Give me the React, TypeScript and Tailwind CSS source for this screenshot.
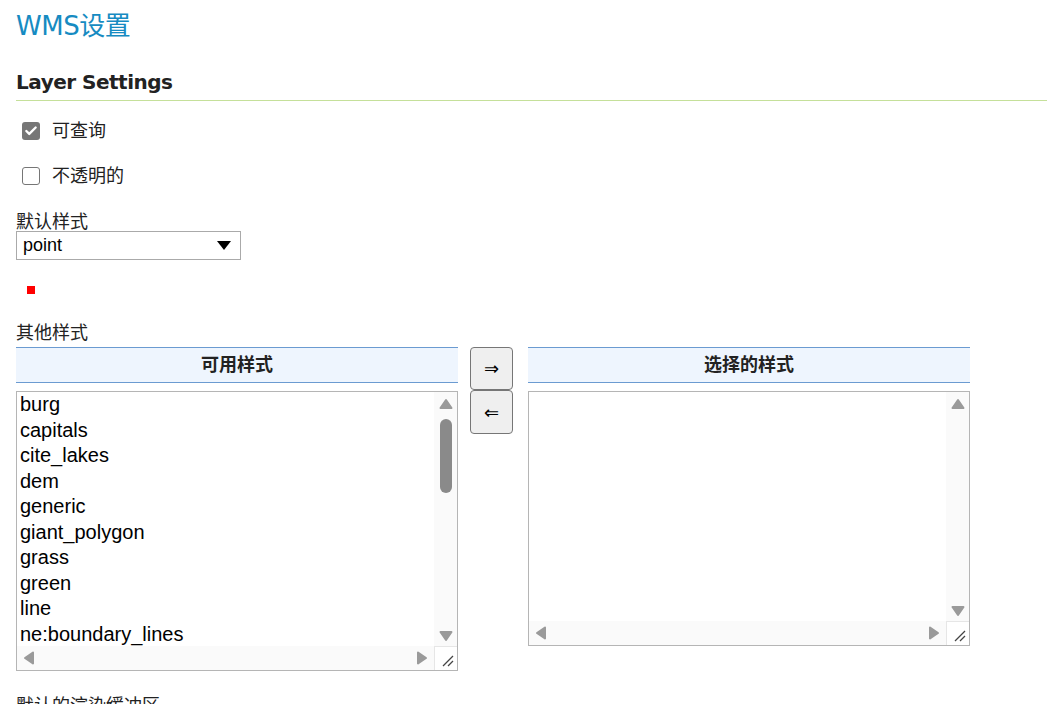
import { Check } from "lucide-react";

const styles = [
  "burg",
  "capitals",
  "cite_lakes",
  "dem",
  "generic",
  "giant_polygon",
  "grass",
  "green",
  "line",
  "ne:boundary_lines",
];

const cjk = "font-['Liberation_Sans','Noto_Sans_CJK_SC',sans-serif]";

function Arrow({ dir }: { dir: "up" | "down" | "left" | "right" }) {
  const pts = {
    up: "1.5,10 7,2 12.5,10",
    down: "1.5,1 7,9 12.5,1",
    left: "10,1.5 2,7 10,12.5",
    right: "1,1.5 9,7 1,12.5",
  }[dir];
  const vertical = dir === "up" || dir === "down";
  return (
    <svg
      width={vertical ? 14 : 11}
      height={vertical ? 11 : 14}
      viewBox={vertical ? "0 0 14 11" : "0 0 11 14"}
    >
      <polygon points={pts} fill="#9a9a9a" strokeLinejoin="round" stroke="#9a9a9a" strokeWidth="2" />
    </svg>
  );
}

function Grip() {
  return (
    <svg width="13" height="13" viewBox="0 0 13 13" className="absolute right-[3px] bottom-[3px]">
      <line x1="2" y1="12" x2="12" y2="2" stroke="#444" strokeWidth="1.2" />
      <line x1="7" y1="12" x2="12" y2="7" stroke="#444" strokeWidth="1.2" />
    </svg>
  );
}

function ListBox({ items, height, thumb }: { items: string[]; height: number; thumb: boolean }) {
  return (
    <div
      className="w-[442px] border border-[#b5b5b5] bg-white flex flex-col"
      style={{ height }}
    >
      <div className="flex flex-1 min-h-0">
        <div className="flex-1 overflow-hidden pl-[3px] font-['Liberation_Sans',sans-serif] text-[20px] leading-[25.5px] text-black">
          {items.map((s) => (
            <div key={s}>{s}</div>
          ))}
        </div>
        <div className="w-[23px] bg-[#fafafa] flex flex-col items-center justify-between pt-[6px] pb-[4px]">
          <div className="flex flex-col items-center">
            <Arrow dir="up" />
            {thumb && <div className="mt-[10px] w-[12px] h-[74px] rounded-full bg-[#8a8a8a]" />}
          </div>
          <Arrow dir="down" />
        </div>
      </div>
      <div className="flex h-[24px]">
        <div className="flex-1 bg-[#fafafa] flex items-center justify-between px-[6px]">
          <Arrow dir="left" />
          <Arrow dir="right" />
        </div>
        <div className="relative w-[23px] bg-white border-l border-t border-[#e6e6e6]">
          <Grip />
        </div>
      </div>
    </div>
  );
}

function Header({ title }: { title: string }) {
  return (
    <div
      className={`w-[442px] h-[36px] border-y border-[#6b9bd1] bg-[#eef5fe] flex items-center justify-center font-bold text-[18px] text-[#222] ${cjk}`}
    >
      {title}
    </div>
  );
}

function CheckRow({ checked, label }: { checked: boolean; label: string }) {
  return (
    <div className="flex items-center gap-[12px] pl-[6px]">
      {checked ? (
        <span className="w-[18px] h-[18px] rounded-[3px] bg-[#767676] flex items-center justify-center">
          <Check className="w-[14px] h-[14px] text-white" strokeWidth={4} />
        </span>
      ) : (
        <span className="w-[18px] h-[18px] rounded-[3px] border-[1.5px] border-[#767676] bg-white" />
      )}
      <span className={`text-[18px] leading-[24px] text-[#222] ${cjk}`}>{label}</span>
    </div>
  );
}

export default function App() {
  return (
    <div className={`min-h-screen bg-white pl-[16px] text-[#222] ${cjk}`}>
      <h1 className="pt-[10px] text-[26px] leading-[32px] text-[#168bc2] font-['DejaVu_Sans','Noto_Sans_CJK_SC',sans-serif] tracking-[-0.5px]">
        WMS设置
      </h1>

      <h2 className="mt-[26px] pb-[4px] border-b border-[#c5e09a] text-[20px] leading-[28px] font-bold text-[#222] font-['DejaVu_Sans',sans-serif] tracking-[-0.5px]">
        Layer Settings
      </h2>

      <div className="mt-[18px] flex flex-col gap-[21px]">
        <CheckRow checked label="可查询" />
        <CheckRow checked={false} label="不透明的" />
      </div>

      <div className="mt-[25px] text-[18px] leading-[18px]">默认样式</div>
      <div className="w-[225px] h-[29px] border border-[#aaa] flex items-center justify-between pl-[6px] pr-[9px] font-['Liberation_Sans',sans-serif] text-[18px] text-black">
        <span>point</span>
        <svg width="14" height="9" viewBox="0 0 14 9">
          <polygon points="0,0 14,0 7,9" fill="#000" />
        </svg>
      </div>

      <div className="mt-[26px] ml-[11px] w-[8px] h-[8px] bg-[#ff0000]" />

      <div className="mt-[27px] text-[18px] leading-[24px]">其他样式</div>

      <div className="mt-[2px] flex items-start">
        <div className="flex flex-col gap-[8px]">
          <Header title="可用样式" />
          <ListBox items={styles} height={280} thumb />
        </div>
        <div className="ml-[12px] flex flex-col">
          <button className="w-[43px] h-[43px] rounded-[4px] border border-[#767676] bg-[#efefef] text-[18px] text-black font-['DejaVu_Sans',sans-serif]">
            ⇒
          </button>
          <button className="w-[43px] h-[44px] rounded-[4px] border border-[#767676] bg-[#efefef] text-[18px] text-black font-['DejaVu_Sans',sans-serif]">
            ⇐
          </button>
        </div>
        <div className="ml-[15px] flex flex-col gap-[8px]">
          <Header title="选择的样式" />
          <ListBox items={[]} height={255} thumb={false} />
        </div>
      </div>

      <div className="mt-[23px] text-[18px] leading-[24px]">默认的渲染缓冲区</div>
    </div>
  );
}
